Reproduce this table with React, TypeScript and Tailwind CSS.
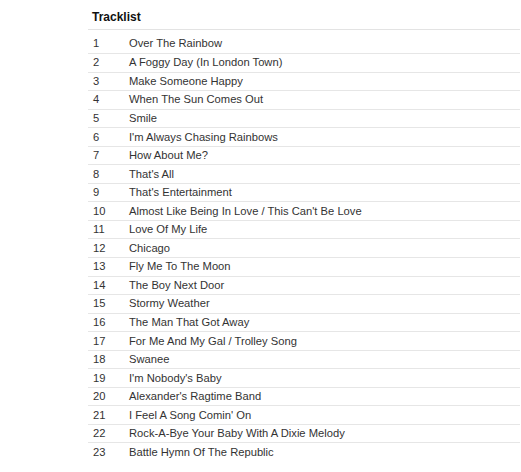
import React from "react";

const tracks = [
  "Over The Rainbow",
  "A Foggy Day (In London Town)",
  "Make Someone Happy",
  "When The Sun Comes Out",
  "Smile",
  "I'm Always Chasing Rainbows",
  "How About Me?",
  "That's All",
  "That's Entertainment",
  "Almost Like Being In Love / This Can't Be Love",
  "Love Of My Life",
  "Chicago",
  "Fly Me To The Moon",
  "The Boy Next Door",
  "Stormy Weather",
  "The Man That Got Away",
  "For Me And My Gal / Trolley Song",
  "Swanee",
  "I'm Nobody's Baby",
  "Alexander's Ragtime Band",
  "I Feel A Song Comin' On",
  "Rock-A-Bye Your Baby With A Dixie Melody",
  "Battle Hymn Of The Republic",
];

export default function App() {
  return (
    <div
      className="w-[521px] h-[472px] bg-white overflow-hidden pl-[88px] pr-px"
      style={{ fontFamily: '"Liberation Sans", Arial, sans-serif' }}
    >
      <div className="h-[30px] pl-[4px] pt-[10px] text-[12px] font-bold text-[#111] leading-[15px] border-b border-[#e3e3e3]">
        Tracklist
      </div>
      {tracks.map((t, i) => (
        <div
          key={i}
          className={`flex items-center text-[11.2px] text-[#333] ${i === 0 ? "h-[23px] pt-[4px]" : "h-[18.55px] border-t border-[#e6e6e6]"}`}
        >
          <span className="w-[41px] pl-[5px]">{i + 1}</span>
          <span>{t}</span>
        </div>
      ))}
    </div>
  );
}
